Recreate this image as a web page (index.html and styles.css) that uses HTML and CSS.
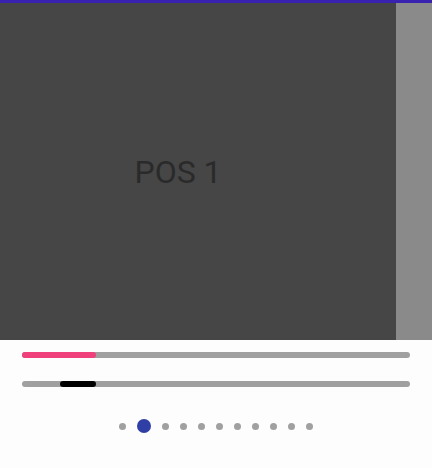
FILE: index.html
```html
<!DOCTYPE html>
<html>
<head>
<meta charset="utf-8">
<link rel="stylesheet" href="styles.css">
</head>
<body>
<div class="topbar"></div>
<div class="pager">
  <div class="page">
    <div class="label">POS 1</div>
  </div>
  <div class="peek"></div>
</div>
<div class="controls">
  <div class="track"><div class="fill pink" style="width:19%"></div></div>
  <div class="track"><div class="fill thumb" style="margin-left:9.8%;width:9.3%"></div></div>
  <div class="dots">
    <span class="dot"></span>
    <span class="dot active"></span>
    <span class="dot"></span>
    <span class="dot"></span>
    <span class="dot"></span>
    <span class="dot"></span>
    <span class="dot"></span>
    <span class="dot"></span>
    <span class="dot"></span>
    <span class="dot"></span>
    <span class="dot"></span>
  </div>
</div>
</body>
</html>
```
FILE: styles.css
```css
html, body {
  margin: 0;
  padding: 0;
  background: #fdfdfe;
  font-family: Roboto, "Noto Sans", sans-serif;
}
.topbar {
  height: 3px;
  background: #3a22b0;
}
.pager {
  display: flex;
  height: 337px;
}
.page {
  width: 396px;
  background: #464646;
  display: flex;
  align-items: center;
}
.label {
  width: 356px;
  text-align: center;
  font-size: 32px;
  color: #2a2a2a;
  line-height: 1;
}
.peek {
  flex: 1;
  background: #8a8a8a;
}
.controls {
  padding: 12px 22px 0 22px;
  display: flex;
  flex-direction: column;
  gap: 23px;
}
.track {
  height: 6px;
  border-radius: 3px;
  background: #a0a0a0;
  display: flex;
}
.fill {
  height: 6px;
  border-radius: 3px;
}
.pink {
  background: #ef407b;
}
.thumb {
  background: #000;
}
.dots {
  display: flex;
  justify-content: center;
  align-items: center;
  gap: 11px;
  margin-top: 9px;
}
.dot {
  width: 7px;
  height: 7px;
  border-radius: 50%;
  background: #a0a0a0;
}
.dot.active {
  width: 14px;
  height: 14px;
  background: #303fa6;
}
```
